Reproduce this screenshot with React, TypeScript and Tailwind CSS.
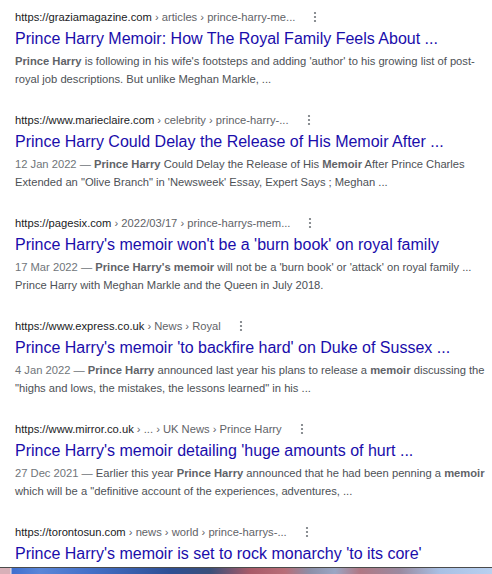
import React from "react";

type Seg = { t: string; b?: boolean };
type Result = {
  host: string;
  crumbs: string;
  title: string;
  date?: string;
  snippet: Seg[];
};

const results: Result[] = [
  {
    host: "https://graziamagazine.com",
    crumbs: " › articles › prince-harry-me...",
    title: "Prince Harry Memoir: How The Royal Family Feels About ...",
    snippet: [
      { t: "Prince Harry", b: true },
      { t: " is following in his wife's footsteps and adding 'author' to his growing list of post-royal job descriptions. But unlike Meghan Markle, ..." },
    ],
  },
  {
    host: "https://www.marieclaire.com",
    crumbs: " › celebrity › prince-harry-...",
    title: "Prince Harry Could Delay the Release of His Memoir After ...",
    date: "12 Jan 2022",
    snippet: [
      { t: "Prince Harry", b: true },
      { t: " Could Delay the Release of His " },
      { t: "Memoir", b: true },
      { t: " After Prince Charles Extended an \"Olive Branch\" in 'Newsweek' Essay, Expert Says ; Meghan ..." },
    ],
  },
  {
    host: "https://pagesix.com",
    crumbs: " › 2022/03/17 › prince-harrys-mem...",
    title: "Prince Harry's memoir won't be a 'burn book' on royal family",
    date: "17 Mar 2022",
    snippet: [
      { t: "Prince Harry's memoir", b: true },
      { t: " will not be a 'burn book' or 'attack' on royal family ... Prince Harry with Meghan Markle and the Queen in July 2018." },
    ],
  },
  {
    host: "https://www.express.co.uk",
    crumbs: " › News › Royal",
    title: "Prince Harry's memoir 'to backfire hard' on Duke of Sussex ...",
    date: "4 Jan 2022",
    snippet: [
      { t: "Prince Harry", b: true },
      { t: " announced last year his plans to release a " },
      { t: "memoir", b: true },
      { t: " discussing the \"highs and lows, the mistakes, the lessons learned\" in his ..." },
    ],
  },
  {
    host: "https://www.mirror.co.uk",
    crumbs: " › ... › UK News › Prince Harry",
    title: "Prince Harry's memoir detailing 'huge amounts of hurt ...",
    date: "27 Dec 2021",
    snippet: [
      { t: "Earlier this year " },
      { t: "Prince Harry", b: true },
      { t: " announced that he had been penning a " },
      { t: "memoir", b: true },
      { t: " which will be a \"definitive account of the experiences, adventures, ..." },
    ],
  },
  {
    host: "https://torontosun.com",
    crumbs: " › news › world › prince-harrys-...",
    title: "Prince Harry's memoir is set to rock monarchy 'to its core'",
    snippet: [],
  },
];

function Dots() {
  return (
    <svg width="4" height="12" viewBox="0 0 4 12" className="ml-[18px] shrink-0">
      <circle cx="2" cy="2" r="1.1" fill="#70757a" />
      <circle cx="2" cy="6" r="1.1" fill="#70757a" />
      <circle cx="2" cy="10" r="1.1" fill="#70757a" />
    </svg>
  );
}

function Item({ r }: { r: Result }) {
  return (
    <div className="mb-[23px]">
      <div className="flex h-[18px] items-center text-[11.2px] leading-[18px] whitespace-pre">
        <span>
          <span className="text-[#202124]">{r.host}</span>
          <span className="text-[#5f6368]">{r.crumbs}</span>
        </span>
        <Dots />
      </div>
      <div className="mt-[2px] text-[16px] leading-[22px] text-[#1a0dab] whitespace-nowrap">{r.title}</div>
      {r.snippet.length > 0 && (
        <div className="mt-[2px] w-[474px] text-[11.2px] leading-[18px] text-[#4d5156]">
          {r.date && <span className="text-[#70757a]">{r.date} — </span>}
          {r.snippet.map((s, i) =>
            s.b ? (
              <b key={i} className="font-bold text-[#5f6368]">
                {s.t}
              </b>
            ) : (
              <span key={i}>{s.t}</span>
            )
          )}
        </div>
      )}
    </div>
  );
}

export default function App() {
  return (
    <div
      className="flex h-[574px] w-[492px] flex-col overflow-hidden bg-white"
      style={{ fontFamily: '"Liberation Sans", Arial, sans-serif' }}
    >
      <div className="flex-1 overflow-hidden pl-[15px] pt-[7.5px]">
        {results.map((r, i) => (
          <Item key={i} r={r} />
        ))}
      </div>
      <div className="h-[7px] border-t border-[#4b4b4b] bg-[linear-gradient(90deg,#d8b0b8_0px,#d8b0b8_10px,#e8e8f0_11px,#3f6fcf_12px,#5a86d8_40px,#4470c8_90px,#2e4f94_170px,#3a4f7a_210px,#a85a68_250px,#b86e78_285px,#8c8fa8_310px,#9aa6c4_335px,#b07884_360px,#9a8aa0_400px,#a8c0e4_440px,#b8d0f0_492px)]" />
    </div>
  );
}
